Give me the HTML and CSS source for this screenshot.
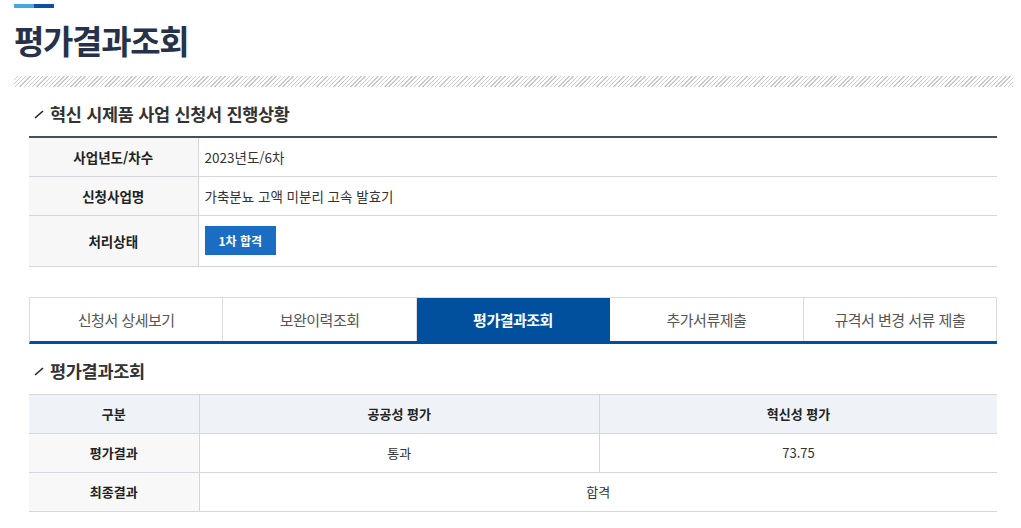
FILE: index.html
```html
<!DOCTYPE html>
<html lang="ko">
<head>
<meta charset="utf-8">
<link rel="stylesheet" href="styles.css">
</head>
<body>
<div class="page">
  <div class="title-mark"><span class="mark-a"></span><span class="mark-b"></span></div>
  <h1 class="page-title">평가결과조회</h1>
  <div class="hatch"></div>

  <div class="content">
    <h2 class="sec-title"><svg class="slash" width="10" height="10" viewBox="0 0 10 10"><line x1="1" y1="9" x2="9" y2="2" stroke="#222" stroke-width="1.6"/></svg>혁신 시제품 사업 신청서 진행상황</h2>
    <table class="info">
      <tr><th>사업년도/차수</th><td>2023년도/6차</td></tr>
      <tr><th>신청사업명</th><td>가축분뇨 고액 미분리 고속 발효기</td></tr>
      <tr class="tall"><th>처리상태</th><td><span class="badge">1차 합격</span></td></tr>
    </table>

    <ul class="tabs">
      <li>신청서 상세보기</li>
      <li>보완이력조회</li>
      <li class="active">평가결과조회</li>
      <li>추가서류제출</li>
      <li>규격서 변경 서류 제출</li>
    </ul>

    <h2 class="sec-title sec2"><svg class="slash" width="10" height="10" viewBox="0 0 10 10"><line x1="1" y1="9" x2="9" y2="2" stroke="#222" stroke-width="1.6"/></svg>평가결과조회</h2>
    <table class="result">
      <tr class="head"><th class="c1">구분</th><th>공공성 평가</th><th>혁신성 평가</th></tr>
      <tr><th class="c1">평가결과</th><td>통과</td><td>73.75</td></tr>
      <tr><th class="c1">최종결과</th><td colspan="2">합격</td></tr>
    </table>
  </div>
</div>
</body>
</html>
```

FILE: styles.css
```css
* { box-sizing: border-box; }
body {
  margin: 0;
  background: #fff;
  font-family: "Noto Sans CJK KR", "Noto Sans", sans-serif;
  color: #333;
}
.page { padding: 4px 8px 0 14px; }
.title-mark { display: flex; height: 4px; }
.mark-a { width: 20px; background: #45a7e2; }
.mark-b { width: 20px; background: #0c4fa4; }
.page-title {
  margin: 10px 0 0 0;
  font-size: 33px;
  line-height: 44px;
  font-weight: 700;
  letter-spacing: -1.3px;
  color: #26324a;
}
.hatch {
  margin-top: 14px;
  height: 11px;
  width: 999px;
  background: repeating-linear-gradient(-45deg, #c9c9c9 0 1px, #fff 1px 3px);
}
.content { padding: 0 0 0 15px; width: 983px; }
.sec-title {
  margin: 15px 0 0 0;
  display: flex;
  align-items: center;
  font-size: 17.5px;
  line-height: 24px;
  font-weight: 700;
  letter-spacing: -0.3px;
  color: #333;
  height: 24px;
}
.slash { margin: 0 6px 0 5px; }
.info {
  margin-top: 10px;
  width: 968px;
  border-collapse: collapse;
  border-top: 2px solid #474e5c;
  font-size: 13.5px;
}
.info th, .info td { border-bottom: 1px solid #d6d6dc; height: 39px; }
.info th {
  width: 169px;
  background: #f7f7f7;
  font-weight: 700;
  color: #222;
  border-right: 1px solid #d6d6dc;
  text-align: center;
}
.info td { padding: 0 0 0 6px; color: #333; }
.info .tall th, .info .tall td { height: 51px; }
.badge {
  display: inline-block;
  background: #1a6dc2;
  color: #fff;
  font-weight: 700;
  font-size: 12px;
  line-height: 29px;
  padding: 0 14px;
}
.tabs {
  list-style: none;
  margin: 30px 0 0 0;
  padding: 0;
  width: 968px;
  display: grid;
  grid-template-columns: repeat(5, 1fr);
  border-top: 1px solid #dcdcdc;
  border-left: 1px solid #dcdcdc;
  border-bottom: 3px solid #00509d;
}
.tabs li {
  height: 43px;
  display: flex;
  align-items: center;
  justify-content: center;
  font-size: 15px;
  letter-spacing: -0.5px;
  color: #555;
  border-right: 1px solid #dcdcdc;
}
.tabs li.active { background: #00509d; color: #fff; font-weight: 700; border-right-color: #00509d; }
.sec2 { margin-top: 15px; }
.result {
  margin-top: 11px;
  width: 968px;
  border-collapse: collapse;
  font-size: 13px;
  text-align: center;
}
.result th, .result td { border: 1px solid #d6d6dc; height: 39px; }
.result tr > :first-child { border-left: none; }
.result tr > :last-child { border-right: none; }
.result .c1 { width: 170px; background: #f8f8f8; }
.result th { font-weight: 700; color: #222; }
.result .head th { background: #eff3f7; }
.result td { color: #333; }
```
